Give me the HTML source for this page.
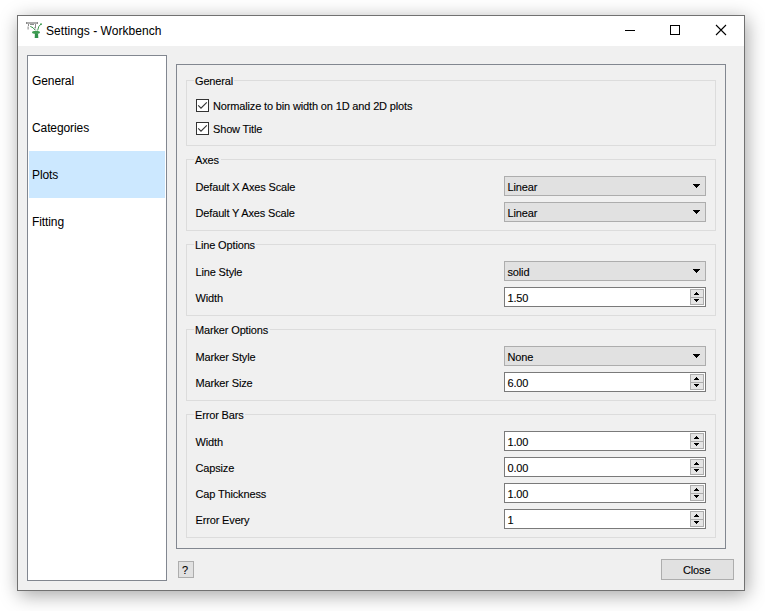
<!DOCTYPE html>
<html><head><meta charset="utf-8">
<style>
*{box-sizing:border-box;margin:0;padding:0}
html,body{width:765px;height:611px;overflow:hidden;background:#fff}
body{position:relative;font-family:"Liberation Sans",sans-serif;font-size:11px;color:#000}
.a{position:absolute}
.t{position:absolute;white-space:nowrap;line-height:13px;font-size:11px;letter-spacing:-0.15px;color:#000;-webkit-text-stroke:0.2px rgba(0,0,0,0.5)}
.L{font-size:12px;letter-spacing:-0.1px;-webkit-text-stroke:0.1px rgba(0,0,0,0.4)}
#win{position:absolute;left:17px;top:15px;width:728px;height:576px;border:1px solid #717171;background:#f0f0f0;box-shadow:2px 4px 18px rgba(0,0,0,0.36)}
#titlebar{position:absolute;left:18px;top:16px;width:726px;height:30px;background:#fff}
#list{position:absolute;left:27px;top:55px;width:140px;height:526px;border:1px solid #828790;background:#fff}
#sel{position:absolute;left:29px;top:151px;width:136px;height:47px;background:#cce8ff}
#frame{position:absolute;left:176px;top:64px;width:550px;height:485px;border:1px solid #828790}
.gb{position:absolute;left:186px;width:530px;border:1px solid #dcdcdc}
.gap{position:absolute;left:194px;height:1px;background:#f0f0f0}
.combo{position:absolute;left:504px;width:202px;height:20px;border:1px solid #adadad;background:#e1e1e1}
.combo svg{position:absolute;left:188px;top:7px}
.spin{position:absolute;left:504px;width:202px;height:20px;border:1px solid #7a7a7a;background:#fff}
.spin svg{position:absolute;left:185px;top:1px}
.btn{position:absolute;border:1px solid #adadad;background:#e1e1e1}
.cb{position:absolute;left:196px;width:13px;height:13px}
</style></head><body>
<div id="win"></div>
<div id="titlebar"></div>

<!-- title icon -->
<svg class="a" style="left:24px;top:20px" width="20" height="20" viewBox="0 0 20 20">
  <rect x="2" y="2" width="12" height="2" fill="#adadad"/>
  <rect x="2" y="2" width="1" height="2" fill="#8a8a8a"/>
  <rect x="13" y="2" width="1" height="2" fill="#8a8a8a"/>
  <rect x="6" y="4" width="4" height="1" fill="#8c8c8c"/>
  <rect x="4" y="4" width="1" height="2" fill="#8c8c8c"/>
  <rect x="3.5" y="6.5" width="1.2" height="3" fill="#9a9a9a"/>
  <rect x="11" y="4" width="1" height="4" fill="#8c8c8c"/>
  <path d="M10.2 7 L12.2 10" stroke="#c9bcc9" stroke-width="1" fill="none"/>
  <g fill="none" stroke="#3d9b50" stroke-width="1">
    <path d="M6.3 6.4 Q9.3 7.2 11.2 10.2"/>
    <path d="M17.2 3.9 Q14.2 5.8 13.6 10.5"/>
  </g>
  <circle cx="17" cy="4.2" r="0.9" fill="#3d9b50"/>
  <ellipse cx="12" cy="12.3" rx="4" ry="1.6" fill="#3e9c51"/>
  <path d="M10.9 13.5 H14 L14.3 18 H10.7 Z" fill="#30904a"/>
</svg>
<div class="t" style="left:46px;top:25px;font-size:12px;letter-spacing:0.05px;-webkit-text-stroke:0.1px rgba(0,0,0,0.4)">Settings - Workbench</div>

<!-- window controls -->
<svg class="a" style="left:620px;top:20px" width="110" height="20" viewBox="0 0 110 20">
  <rect x="5" y="10" width="10" height="1" fill="#000"/>
  <rect x="50.5" y="5.5" width="9" height="9" fill="none" stroke="#000" stroke-width="1"/>
  <path d="M96 5 L106 15 M106 5 L96 15" stroke="#000" stroke-width="1.1" fill="none"/>
</svg>

<div id="list"></div>
<div id="sel"></div>
<div class="t L" style="left:32px;top:75px">General</div>
<div class="t L" style="left:32px;top:122px">Categories</div>
<div class="t L" style="left:32px;top:169px">Plots</div>
<div class="t L" style="left:32px;top:216px">Fitting</div>

<div id="frame"></div>

<div class="gb" style="top:80px;height:66px"></div>
<div class="gap" style="top:80px;width:40px"></div>
<div class="gb" style="top:159px;height:72px"></div>
<div class="gap" style="top:159px;width:27px"></div>
<div class="gb" style="top:244px;height:72px"></div>
<div class="gap" style="top:244px;width:62px"></div>
<div class="gb" style="top:329px;height:72px"></div>
<div class="gap" style="top:329px;width:76px"></div>
<div class="gb" style="top:414px;height:124px"></div>
<div class="gap" style="top:414px;width:51px"></div>

<div class="t" style="left:195px;top:75px">General</div>
<div class="t" style="left:195px;top:154px">Axes</div>
<div class="t" style="left:195px;top:239px">Line Options</div>
<div class="t" style="left:195px;top:324px">Marker Options</div>
<div class="t" style="left:195px;top:409px">Error Bars</div>

<svg class="cb" style="top:99px" width="13" height="13" viewBox="0 0 13 13"><rect x="0.5" y="0.5" width="12" height="12" fill="#fff" stroke="#333"/><path d="M2.2 6.3 L5 9.2 L10.8 3.3" stroke="#333" stroke-width="1.1" fill="none"/></svg>
<svg class="cb" style="top:122px" width="13" height="13" viewBox="0 0 13 13"><rect x="0.5" y="0.5" width="12" height="12" fill="#fff" stroke="#333"/><path d="M2.2 6.3 L5 9.2 L10.8 3.3" stroke="#333" stroke-width="1.1" fill="none"/></svg>
<div class="t" style="left:213px;top:100px">Normalize to bin width on 1D and 2D plots</div>
<div class="t" style="left:213px;top:123px">Show Title</div>

<!-- rows -->
<div class="t" style="left:195.5px;top:181px">Default X Axes Scale</div>
<div class="combo" style="top:176px"><svg width="7" height="4"><path d="M0 0h7v1h-1v1h-1v1h-1v1h-1v-1h-1v-1h-1v-1h-1z" fill="#000"/></svg></div>
<div class="t" style="left:507.5px;top:181px">Linear</div>

<div class="t" style="left:195.5px;top:207px">Default Y Axes Scale</div>
<div class="combo" style="top:202px"><svg width="7" height="4"><path d="M0 0h7v1h-1v1h-1v1h-1v1h-1v-1h-1v-1h-1v-1h-1z" fill="#000"/></svg></div>
<div class="t" style="left:507.5px;top:207px">Linear</div>

<div class="t" style="left:195.5px;top:266px">Line Style</div>
<div class="combo" style="top:261px"><svg width="7" height="4"><path d="M0 0h7v1h-1v1h-1v1h-1v1h-1v-1h-1v-1h-1v-1h-1z" fill="#000"/></svg></div>
<div class="t" style="left:507.5px;top:266px">solid</div>

<div class="t" style="left:195.5px;top:292px">Width</div>
<div class="spin" style="top:287px"><svg width="14" height="16" viewBox="0 0 14 16"><rect x="0.5" y="0.5" width="13" height="8" fill="#e5e5e5" stroke="#adadad"/><rect x="0.5" y="8.5" width="13" height="7" fill="#e5e5e5" stroke="#adadad"/><path d="M6 3h1v1h1v1h1v1h-5v-1h1v-1h1z" fill="#000"/><path d="M4 10h5v1h-1v1h-1v1h-1v-1h-1v-1h-1z" fill="#000"/></svg></div>
<div class="t" style="left:507.5px;top:292px">1.50</div>

<div class="t" style="left:195.5px;top:351px">Marker Style</div>
<div class="combo" style="top:346px"><svg width="7" height="4"><path d="M0 0h7v1h-1v1h-1v1h-1v1h-1v-1h-1v-1h-1v-1h-1z" fill="#000"/></svg></div>
<div class="t" style="left:507.5px;top:351px">None</div>

<div class="t" style="left:195.5px;top:377px">Marker Size</div>
<div class="spin" style="top:372px"><svg width="14" height="16" viewBox="0 0 14 16"><rect x="0.5" y="0.5" width="13" height="8" fill="#e5e5e5" stroke="#adadad"/><rect x="0.5" y="8.5" width="13" height="7" fill="#e5e5e5" stroke="#adadad"/><path d="M6 3h1v1h1v1h1v1h-5v-1h1v-1h1z" fill="#000"/><path d="M4 10h5v1h-1v1h-1v1h-1v-1h-1v-1h-1z" fill="#000"/></svg></div>
<div class="t" style="left:507.5px;top:377px">6.00</div>

<div class="t" style="left:195.5px;top:436px">Width</div>
<div class="spin" style="top:431px"><svg width="14" height="16" viewBox="0 0 14 16"><rect x="0.5" y="0.5" width="13" height="8" fill="#e5e5e5" stroke="#adadad"/><rect x="0.5" y="8.5" width="13" height="7" fill="#e5e5e5" stroke="#adadad"/><path d="M6 3h1v1h1v1h1v1h-5v-1h1v-1h1z" fill="#000"/><path d="M4 10h5v1h-1v1h-1v1h-1v-1h-1v-1h-1z" fill="#000"/></svg></div>
<div class="t" style="left:507.5px;top:436px">1.00</div>

<div class="t" style="left:195.5px;top:462px">Capsize</div>
<div class="spin" style="top:457px"><svg width="14" height="16" viewBox="0 0 14 16"><rect x="0.5" y="0.5" width="13" height="8" fill="#e5e5e5" stroke="#adadad"/><rect x="0.5" y="8.5" width="13" height="7" fill="#e5e5e5" stroke="#adadad"/><path d="M6 3h1v1h1v1h1v1h-5v-1h1v-1h1z" fill="#000"/><path d="M4 10h5v1h-1v1h-1v1h-1v-1h-1v-1h-1z" fill="#000"/></svg></div>
<div class="t" style="left:507.5px;top:462px">0.00</div>

<div class="t" style="left:195.5px;top:488px">Cap Thickness</div>
<div class="spin" style="top:483px"><svg width="14" height="16" viewBox="0 0 14 16"><rect x="0.5" y="0.5" width="13" height="8" fill="#e5e5e5" stroke="#adadad"/><rect x="0.5" y="8.5" width="13" height="7" fill="#e5e5e5" stroke="#adadad"/><path d="M6 3h1v1h1v1h1v1h-5v-1h1v-1h1z" fill="#000"/><path d="M4 10h5v1h-1v1h-1v1h-1v-1h-1v-1h-1z" fill="#000"/></svg></div>
<div class="t" style="left:507.5px;top:488px">1.00</div>

<div class="t" style="left:195.5px;top:514px">Error Every</div>
<div class="spin" style="top:509px"><svg width="14" height="16" viewBox="0 0 14 16"><rect x="0.5" y="0.5" width="13" height="8" fill="#e5e5e5" stroke="#adadad"/><rect x="0.5" y="8.5" width="13" height="7" fill="#e5e5e5" stroke="#adadad"/><path d="M6 3h1v1h1v1h1v1h-5v-1h1v-1h1z" fill="#000"/><path d="M4 10h5v1h-1v1h-1v1h-1v-1h-1v-1h-1z" fill="#000"/></svg></div>
<div class="t" style="left:507.5px;top:514px">1</div>

<div class="btn" style="left:178px;top:561px;width:16px;height:17px"></div>
<div class="t" style="left:182px;top:564px">?</div>
<div class="btn" style="left:661px;top:559px;width:73px;height:21px"></div>
<div class="t" style="left:683px;top:564px">Close</div>
</body></html>
